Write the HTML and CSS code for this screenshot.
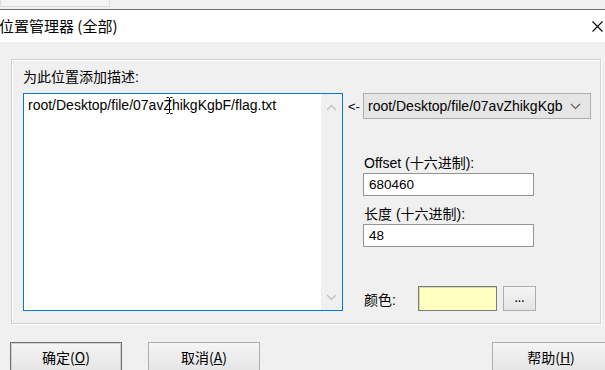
FILE: index.html
```html
<!DOCTYPE html>
<html lang="zh">
<head>
<meta charset="utf-8">
<title>位置管理器 (全部)</title>
<link rel="stylesheet" href="styles.css">
</head>
<body>
<div class="window">
  <div class="top-strip"><div class="ghost-btn"></div></div>
  <div class="titlebar">
    <span class="title">位置管理器 (全部)</span>
    <svg class="close" width="11" height="11" viewBox="0 0 11 11"><path d="M0.5 0.5 L10.5 10.5 M10.5 0.5 L0.5 10.5" stroke="#000" stroke-width="1.1" fill="none"/></svg>
  </div>
  <div class="client">
    <div class="group">
      <div class="left-col">
        <div class="label">为此位置添加描述:</div>
        <div class="memo">
          <div class="memo-text">root/Desktop/file/07avZhikgKgbF/flag.txt</div>
          <svg class="ibeam" width="7" height="17" viewBox="0 0 7 17"><path d="M0.5 0.5 H2.5 L3.5 1.5 L4.5 0.5 H6.5 M3.5 1.5 V15.5 M0.5 16.5 H2.5 L3.5 15.5 L4.5 16.5 H6.5" stroke="#000" stroke-width="1" fill="none"/></svg>
          <div class="vscroll">
            <svg class="chev" width="11" height="7" viewBox="0 0 11 7"><path d="M1 6 L5.5 1.5 L10 6" stroke="#c2c2c2" stroke-width="1.3" fill="none"/></svg>
            <svg class="chev" width="11" height="7" viewBox="0 0 11 7"><path d="M1 1 L5.5 5.5 L10 1" stroke="#c2c2c2" stroke-width="1.3" fill="none"/></svg>
          </div>
        </div>
      </div>
      <div class="right-col">
        <div class="combo-row">
          <span class="arrow-text">&lt;-</span>
          <div class="combo">
            <span class="combo-text">root/Desktop/file/07avZhikgKgb</span>
            <svg class="combo-chev" width="11" height="7" viewBox="0 0 11 7"><path d="M1 1 L5.5 5.5 L10 1" stroke="#606060" stroke-width="1.2" fill="none"/></svg>
          </div>
        </div>
        <div class="field first">
          <div class="field-label">Offset (十六进制):</div>
          <div class="edit">680460</div>
        </div>
        <div class="field">
          <div class="field-label">长度 (十六进制):</div>
          <div class="edit">48</div>
        </div>
        <div class="color-row">
          <span class="color-label">颜色:</span>
          <div class="swatch"></div>
          <div class="btn small">...</div>
        </div>
      </div>
    </div>
    <div class="buttons">
      <div class="btn default">确定(<u>O</u>)</div>
      <div class="btn cancel">取消(<u>A</u>)</div>
      <div class="btn help">帮助(<u>H</u>)</div>
    </div>
  </div>
</div>
</body>
</html>
```

FILE: styles.css
```css
* { box-sizing: border-box; }
html, body { margin: 0; padding: 0; }
body {
  width: 605px;
  height: 370px;
  overflow: hidden;
  font-family: "Liberation Sans", "Noto Sans CJK SC", sans-serif;
  font-size: 14px;
  color: #000;
  background: #f0f0f0;
}
.window { width: 605px; height: 370px; display: flex; flex-direction: column; }

.top-strip {
  height: 10px;
  background: #f0f0f0;
  border-bottom: 1px solid #6f6f6f;
}
.ghost-btn {
  width: 110px;
  height: 7px;
  border: 1px solid #dcdcdc;
  border-top: none;
  background: #f4f4f4;
}

.titlebar {
  height: 32px;
  background: #fff;
  display: flex;
  align-items: center;
  justify-content: space-between;
  padding: 0 2px 0 0;
}
.title { font-size: 15px; line-height: 32px; margin-left: -1px; font-family: "Noto Sans CJK SC", sans-serif; }
.close { margin-top: 1px; }

.client {
  flex: 1;
  background: #f0f0f0;
  padding-top: 17px;
  overflow: hidden;
}
.group {
  margin-left: 11px;
  width: 590px;
  height: 265px;
  border: 1px solid #d2d2d2;
  box-shadow: inset 1px 1px 0 #fff, 1px 1px 0 #fff;
  display: flex;
  padding-left: 11px;
}
.left-col { width: 320px; display: flex; flex-direction: column; }
.label { margin-top: 8px; height: 25px; line-height: 18px; }
.memo {
  position: relative;
  height: 218px;
  background: #fff;
  border: 1px solid #0078d7;
  display: flex;
}
.memo-text { flex: 1; padding: 3px 0 0 4px; line-height: 17px; font-size: 14px; }
.ibeam { position: absolute; left: 142px; top: 3px; }
.vscroll {
  width: 21px;
  background: #f0f0f0;
  display: flex;
  flex-direction: column;
  justify-content: space-between;
  align-items: center;
  padding: 10px 0 9px;
}

.right-col { flex: 1; margin-left: 4px; padding-top: 33px; }
.combo-row { display: flex; align-items: center; height: 26px; }
.arrow-text { width: 16px; padding-left: 1px; font-size: 13px; }
.combo {
  width: 228px;
  height: 26px;
  background: #e5e5e5;
  border: 1px solid #adadad;
  display: flex;
  align-items: center;
  justify-content: space-between;
  padding: 0 9px 0 4px;
}
.combo-text { font-size: 14px; }

.field { margin-left: 16px; margin-top: 9px; }
.field.first { margin-top: 35px; }
.field-label { line-height: 18px; margin-bottom: 1px; margin-left: 1px; }
.edit {
  width: 171px;
  height: 23px;
  background: #fff;
  border: 1px solid #949494;
  padding-left: 5px;
  line-height: 21px;
  font-size: 13.5px;
}

.color-row {
  display: flex;
  align-items: center;
  margin-left: 17px;
  margin-top: 39px;
  height: 25px;
}
.color-label { width: 54px; }
.swatch {
  width: 79px;
  height: 25px;
  background: #ffffc0;
  border: 1px solid #7d7d7d;
  box-shadow: inset 1px 1px 0 #d8d8b0;
}

.btn {
  background: linear-gradient(#f5f5f5, #e4e4e4);
  border: 1px solid #adadad;
  display: flex;
  align-items: center;
  justify-content: center;
  font-family: "Noto Sans CJK SC", sans-serif;
}
.btn.small { width: 33px; height: 25px; margin-left: 6px; font-size: 12px; padding-bottom: 4px; }

.buttons { display: flex; margin-top: 18px; }
.buttons .btn { width: 112px; height: 32px; font-size: 14px; padding-bottom: 2px; }
.btn.default { margin-left: 10px; border-color: #707070; box-shadow: inset 0 0 0 1px #cfcfcf; }
.btn.cancel { margin-left: 26px; }
.btn.help { margin-left: auto; width: 118px; flex: none; margin-right: -5px; }
```
